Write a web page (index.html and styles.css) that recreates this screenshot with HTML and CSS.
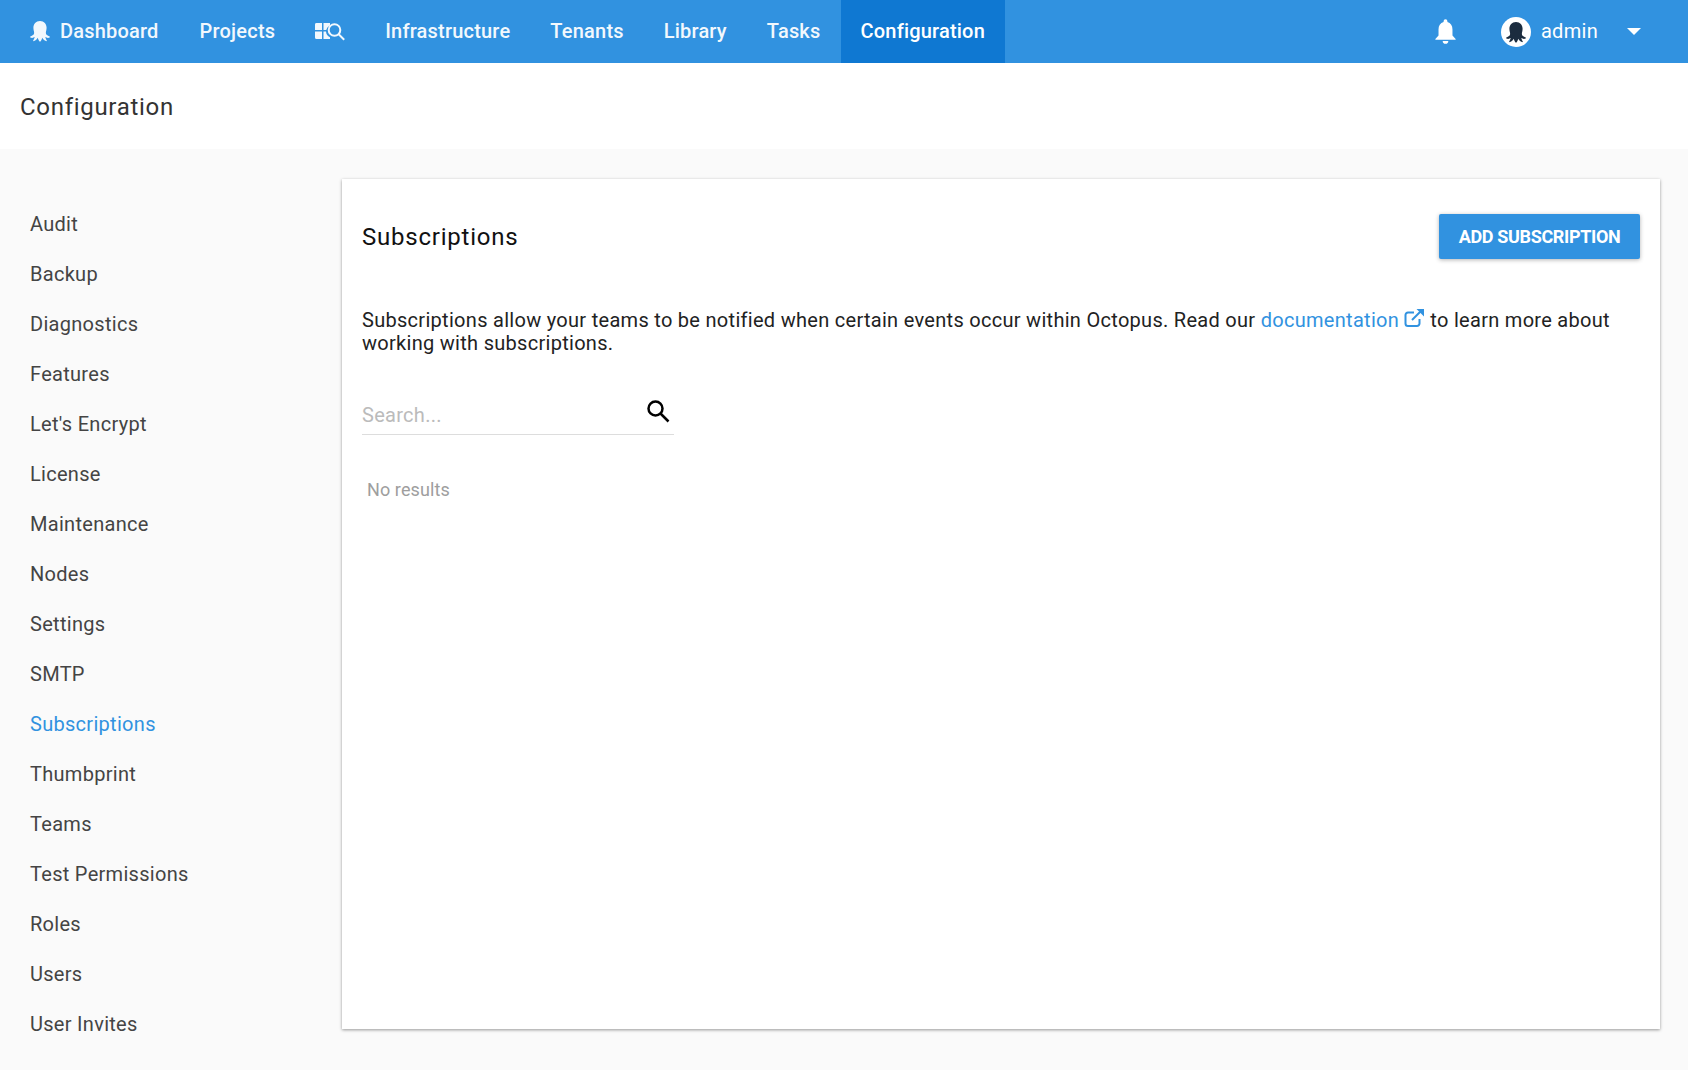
FILE: index.html
```html
<!DOCTYPE html>
<html>
<head>
    <meta charset="utf-8">
    <title>Configuration</title>
    <link rel="stylesheet" href="styles.css">
</head>
<body>
    <svg class="defs" width="0" height="0">
        <symbol id="octo" viewBox="0 0 24 24">
            <path d="M12 1C7.500 1 4.800 4.200 4.800 8.500C4.800 11 5.600 12.500 5.600 14.200C5.600 16 3.800 17.200 1.500 18C1 18.200 1 19 1.600 19.200C3.200 19.800 5 19.500 6.200 18.600C6 20 5.200 21.400 4.600 22.300C4.300 22.900 4.900 23.200 5.500 23C7.200 22.400 8.800 21 9.500 19.400C9.900 20.800 10.400 22 11.200 23.200C11.600 23.700 12.400 23.700 12.800 23.200C13.600 22 14.100 20.800 14.500 19.400C15.200 21 16.800 22.400 18.500 23C19.100 23.200 19.700 22.900 19.400 22.300C18.800 21.400 18 20 17.800 18.600C19 19.500 20.800 19.800 22.400 19.200C23 19 23 18.200 22.500 18C20.200 17.200 18.400 16 18.400 14.200C18.400 12.500 19.200 11 19.200 8.500C19.200 4.200 16.500 1 12 1z"/>
        </symbol>
    </svg>

    <header class="topnav">
        <a class="nav-item nav-brand" href="#">
            <svg class="nav-logo"><use href="#octo"/></svg>
            Dashboard
        </a>
        <a class="nav-item" href="#">Projects</a>
        <a class="nav-item" href="#">
            <svg width="30" height="20" viewBox="0 0 30 20">
                <path class="fill-white" d="M0 3.500a1.500 1.500 0 0 1 1.500-1.500H7v7H0zM8.500 2H15v2.500a7 7 0 0 0-3.800 4.500H8.500zM0 10.500h7V18H1.500A1.500 1.500 0 0 1 0 16.500zM8.500 10.500h2.500a7 7 0 0 0 4 5.800V18H8.500z"/>
                <circle class="line-white" cx="19.500" cy="9" r="5.800"/>
                <path class="line-white" d="M23.700 13.200l5.500 5.500"/>
            </svg>
        </a>
        <a class="nav-item" href="#">Infrastructure</a>
        <a class="nav-item" href="#">Tenants</a>
        <a class="nav-item" href="#">Library</a>
        <a class="nav-item" href="#">Tasks</a>
        <a class="nav-item active" href="#">Configuration</a>

        <div class="nav-right">
            <svg class="bell" width="27" height="27" viewBox="0 0 24 24">
                <path d="M12 2a1.700 1.700 0 0 0-1.700 1.700v.7C7.300 5.200 5.800 7.800 5.800 11v5.500L3 19.500v.7h18v-.7l-2.800-3V11c0-3.200-1.500-5.800-4.500-6.600v-.7A1.700 1.700 0 0 0 12 2zM9.500 21.300a2.500 2.500 0 0 0 5 0z"/>
            </svg>
            <div class="avatar"><svg width="22" height="22"><use href="#octo"/></svg></div>
            <span class="username">admin</span>
            <span class="caret"></span>
        </div>
    </header>

    <div class="page-title">Configuration</div>

    <main class="content">
        <nav class="sidebar">
            <a href="#">Audit</a>
            <a href="#">Backup</a>
            <a href="#">Diagnostics</a>
            <a href="#">Features</a>
            <a href="#">Let's Encrypt</a>
            <a href="#">License</a>
            <a href="#">Maintenance</a>
            <a href="#">Nodes</a>
            <a href="#">Settings</a>
            <a href="#">SMTP</a>
            <a href="#" class="current">Subscriptions</a>
            <a href="#">Thumbprint</a>
            <a href="#">Teams</a>
            <a href="#">Test Permissions</a>
            <a href="#">Roles</a>
            <a href="#">Users</a>
            <a href="#">User Invites</a>
        </nav>

        <section class="card">
            <div class="card-head">
                <h2>Subscriptions</h2>
                <button class="btn" type="button">ADD SUBSCRIPTION</button>
            </div>
            <p class="intro">Subscriptions allow your teams to be notified when certain events occur within Octopus. Read our <a href="#">documentation<svg class="ext" width="21" height="20" viewBox="0 0 21 20"><path d="M15.500 11v4.500a2.500 2.500 0 0 1-2.500 2.500H4a2.500 2.500 0 0 1-2.500-2.500V7A2.500 2.500 0 0 1 4 4.500h6"/><path d="M8 12L17 3"/><path class="ext-head" d="M12.500 1H20v7.500z"/></svg></a> to learn more about working with subscriptions.</p>
            <div class="search">
                <span class="search-text">Search...</span>
                <svg width="26" height="26" viewBox="0 0 26 26"><circle cx="10.500" cy="10.500" r="7"/><path d="M15.500 15.500L23.500 23.500"/></svg>
            </div>
            <div class="no-results">No results</div>
        </section>
    </main>
</body>
</html>
```

FILE: styles.css
```css
* {
    box-sizing: border-box;
}

body {
    margin: 0;
    height: 1070px;
    overflow: hidden;
    background-color: #fafafa;
    font-family: Roboto, sans-serif;
    font-size: 20px;
    letter-spacing: 0.29px;
}

a {
    text-decoration: none;
}

.defs {
    display: block;
    height: 0;
}

.topnav {
    display: flex;
    height: 63px;
    padding-left: 20px;
    background-color: #3192e0;
}

.nav-item {
    display: flex;
    align-items: center;
    padding: 0 20px 2px;
    color: white;
    font-weight: 500;
    font-size: 20px;
    letter-spacing: 0.2px;
    opacity: 0.94;
}

.nav-brand {
    padding-left: 9px;
    padding-right: 21px;
}

.nav-logo {
    width: 22px;
    height: 22px;
    margin-right: 9px;
    fill: white;
}

.fill-white {
    fill: white;
}

.line-white {
    fill: none;
    stroke: white;
    stroke-width: 2;
}

.active {
    background-color: #0f78d2;
    opacity: 1;
}

.nav-right {
    display: flex;
    align-items: center;
    margin-left: auto;
    color: white;
}

.bell {
    fill: white;
    margin-right: 42px;
    margin-bottom: 3px;
}

.avatar {
    display: flex;
    align-items: center;
    justify-content: center;
    width: 30px;
    height: 30px;
    border-radius: 50%;
    background: white;
    fill: #1b2c3f;
}

.username {
    margin-left: 10px;
    margin-bottom: 2px;
    font-size: 20px;
}

.caret {
    width: 0;
    height: 0;
    margin: 0 47px 0 29px;
    border-left: 7px solid transparent;
    border-right: 7px solid transparent;
    border-top: 7px solid white;
}

.page-title {
    height: 86px;
    padding: 30px 20px 0;
    background: white;
    color: #333;
    font-size: 24px;
    letter-spacing: 0.7px;
}

.content {
    display: flex;
    padding: 30px 28px 0 0;
}

.sidebar {
    display: flex;
    flex-direction: column;
    width: 342px;
    padding-top: 20px;
}

.sidebar a {
    height: 50px;
    line-height: 50px;
    padding-left: 30px;
    color: #444;
}

.sidebar .current {
    color: #3192e0;
}

.card {
    flex: 1;
    height: 850px;
    padding: 35px 20px 0;
    background: white;
    box-shadow: 0 1px 3px rgba(0, 0, 0, 0.4);
}

.card-head {
    display: flex;
    align-items: center;
    justify-content: space-between;
}

h2 {
    margin: 0;
    color: #111;
    font-size: 24px;
    font-weight: 400;
    letter-spacing: 0.78px;
}

.btn {
    width: 201px;
    height: 45px;
    padding: 0;
    border: 0;
    border-radius: 2px;
    background: #3192e0;
    color: white;
    font-family: Roboto, sans-serif;
    font-size: 18px;
    font-weight: 700;
    letter-spacing: -0.35px;
    box-shadow: 0 1px 4px rgba(0, 0, 0, 0.3);
}

.intro {
    margin: 49px 0 0;
    color: #222;
    line-height: 23px;
}

.intro a {
    color: #3192e0;
}

.ext {
    margin-left: 5px;
    vertical-align: -1px;
    fill: none;
    stroke: #3192e0;
    stroke-width: 2;
}

.ext-head {
    fill: #3192e0;
    stroke: none;
}

.search {
    display: flex;
    align-items: center;
    justify-content: space-between;
    width: 312px;
    height: 46px;
    margin-top: 34px;
    padding-right: 3px;
    border-bottom: 1px solid #ddd;
    color: #bbb;
}

.search-text {
    padding-top: 6px;
}

.search svg {
    margin-bottom: 2px;
    fill: none;
    stroke: black;
    stroke-width: 2.500;
}

.no-results {
    margin: 44px 0 0 5px;
    color: #9e9e9e;
    font-size: 18px;
    letter-spacing: 0.1px;
}
```
